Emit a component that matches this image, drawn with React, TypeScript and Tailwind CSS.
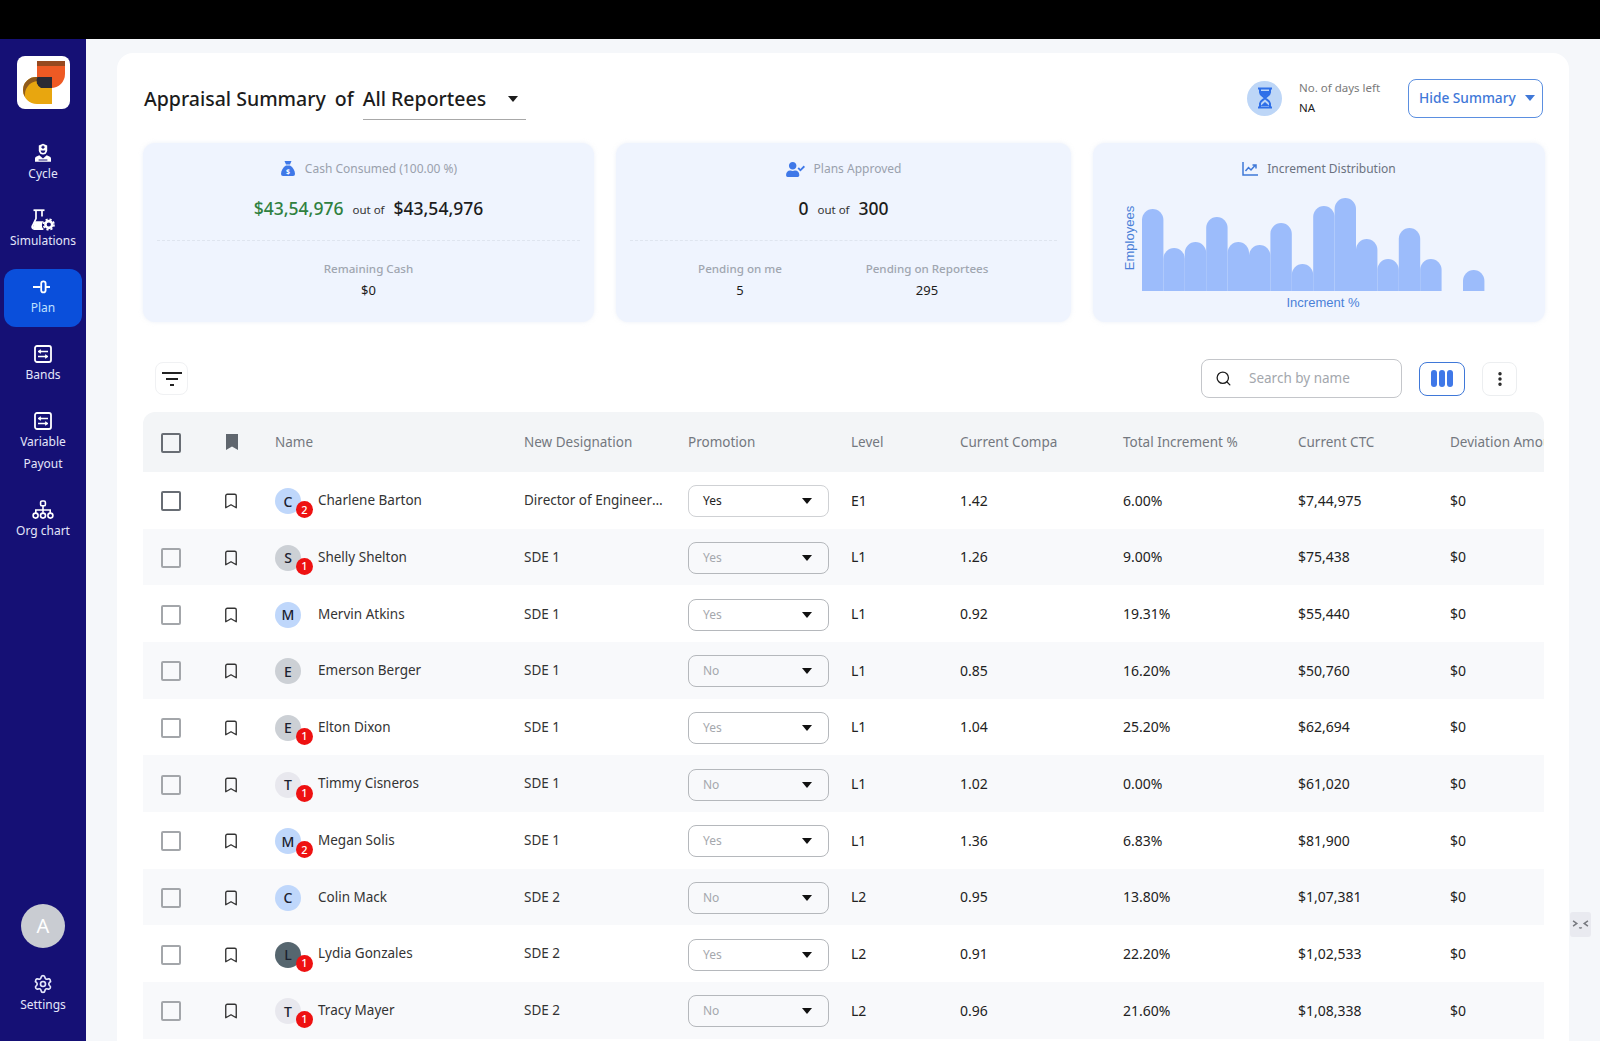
import { Bookmark, EllipsisVertical, Search, Settings } from "lucide-react";
import type { ReactNode } from "react";
import { FaUserCheck } from "react-icons/fa";

type Row = {
  name: string;
  designation: string;
  promotion: string;
  level: string;
  compa: string;
  increment: string;
  ctc: string;
  badge?: number;
  avatar: string;
};

const blue = "bg-[#bfd7fb]";
const gray = "bg-[#ccd0d5]";
const light = "bg-[#e8e8ee]";
const dark = "bg-[#56666f]";

const rows: Row[] = [
  { name: "Charlene Barton", designation: "Director of Engineering", promotion: "Yes", level: "E1", compa: "1.42", increment: "6.00%", ctc: "$7,44,975", badge: 2, avatar: blue },
  { name: "Shelly Shelton", designation: "SDE 1", promotion: "Yes", level: "L1", compa: "1.26", increment: "9.00%", ctc: "$75,438", badge: 1, avatar: gray },
  { name: "Mervin Atkins", designation: "SDE 1", promotion: "Yes", level: "L1", compa: "0.92", increment: "19.31%", ctc: "$55,440", avatar: blue },
  { name: "Emerson Berger", designation: "SDE 1", promotion: "No", level: "L1", compa: "0.85", increment: "16.20%", ctc: "$50,760", avatar: gray },
  { name: "Elton Dixon", designation: "SDE 1", promotion: "Yes", level: "L1", compa: "1.04", increment: "25.20%", ctc: "$62,694", badge: 1, avatar: gray },
  { name: "Timmy Cisneros", designation: "SDE 1", promotion: "No", level: "L1", compa: "1.02", increment: "0.00%", ctc: "$61,020", badge: 1, avatar: light },
  { name: "Megan Solis", designation: "SDE 1", promotion: "Yes", level: "L1", compa: "1.36", increment: "6.83%", ctc: "$81,900", badge: 2, avatar: blue },
  { name: "Colin Mack", designation: "SDE 2", promotion: "No", level: "L2", compa: "0.95", increment: "13.80%", ctc: "$1,07,381", avatar: blue },
  { name: "Lydia Gonzales", designation: "SDE 2", promotion: "Yes", level: "L2", compa: "0.91", increment: "22.20%", ctc: "$1,02,533", badge: 1, avatar: dark },
  { name: "Tracy Mayer", designation: "SDE 2", promotion: "No", level: "L2", compa: "0.96", increment: "21.60%", ctc: "$1,08,338", badge: 1, avatar: light },
];

const bars = [82, 43, 49, 74, 49, 46, 68, 27, 85, 93, 52, 32, 63, 32, 0, 21];

function Logo() {
  return (
    <svg viewBox="0 0 53 53" className="h-[53px] w-[53px] rounded-lg bg-white">
      <path d="M20 5H48V18A14 14 0 0 1 34 32H20Z" fill="#ee5a24" />
      <path d="M20 5H48V10H20Z" fill="#96491f" />
      <path d="M35 48H20A14 14 0 0 1 6 34A13 13 0 0 1 20 21H35Z" fill="#e8a60f" />
      <path d="M20 21A13 13 0 0 0 6 34A14 14 0 0 0 8 41A14 14 0 0 1 20 25H24V21Z" fill="#8f5a1c" />
      <path d="M20.5 21H35V32H24A8 8 0 0 1 20.5 21Z" fill="#2a2a34" />
    </svg>
  );
}

function CycleIcon() {
  return (
    <svg viewBox="0 0 20 20" className="h-5 w-5" fill="#fff">
      <path d="M5.8 2.6 10 .8l4.2 1.8v4.6a4.2 4.2 0 0 1-8.4 0Z" />
      <path d="M7.6 7.6h4.8a2.4 2.4 0 0 1-4.8 0Z" fill="#151075" />
      <rect x="9.3" y="2.6" width="1.4" height="3.2" fill="#151075" />
      <rect x="8.4" y="3.5" width="3.2" height="1.4" fill="#151075" />
      <path d="M6.3 12.2 10 15.6l3.7-3.4 3.3 1.6a1.8 1.8 0 0 1 1 1.6v3.4H2v-3.4a1.8 1.8 0 0 1 1-1.6Z" />
      <path d="M5.6 17h8.8" stroke="#151075" strokeWidth="1" />
    </svg>
  );
}

function SimulationsIcon() {
  return (
    <svg viewBox="0 0 24 22" className="h-[22px] w-6">
      <path d="M2.5 1.2h11" stroke="#fff" strokeWidth="1.8" fill="none" />
      <path d="M5 1.5v8L1.4 17a2.2 2.2 0 0 0 2 3.2h9M11 1.5v6" stroke="#fff" strokeWidth="1.7" fill="none" />
      <path d="M3.8 12.2h8.6a7 7 0 0 0-.4 7.8H3.6a1.6 1.6 0 0 1-1.5-2.4Z" fill="#fff" />
      <circle cx="17.8" cy="15.5" r="3.4" fill="none" stroke="#fff" strokeWidth="2.6" />
      <circle cx="17.8" cy="15.5" r="5.2" fill="none" stroke="#fff" strokeWidth="1.7" strokeDasharray="2.2 1.9" />
    </svg>
  );
}

function PlanIcon() {
  return (
    <svg viewBox="0 0 20 20" className="h-5 w-5" fill="none" strokeWidth="1.8">
      <path d="M0 10h7.5M13 10h4" stroke="#fff" />
      <rect x="8.2" y="4.4" width="4.4" height="11" rx="2.2" stroke="#fff" />
    </svg>
  );
}

function BandsIcon() {
  return (
    <svg viewBox="0 0 20 20" className="h-5 w-5" fill="none" stroke="#fff">
      <rect x="2" y="2" width="16" height="16" rx="2" strokeWidth="1.8" />
      <path d="M5 7.5h10M5 12.5h10" strokeWidth="1.5" />
      <path d="M7.8 5.8 6 7.5l1.8 1.7M12.2 10.8l1.8 1.7-1.8 1.7" strokeWidth="1.3" />
    </svg>
  );
}

function OrgIcon() {
  return (
    <svg viewBox="0 0 22 20" className="h-5 w-[22px]" fill="none" stroke="#fff" strokeWidth="1.6">
      <rect x="8.6" y="1" width="4.8" height="4.8" rx="1.4" />
      <path d="M11 5.8v7M3.8 13v-3h14.4v3" />
      <circle cx="3.6" cy="15.6" r="2.5" />
      <circle cx="11" cy="15.6" r="2.5" />
      <circle cx="18.4" cy="15.6" r="2.5" />
    </svg>
  );
}

function Caret({ className }: { className: string }) {
  return (
    <svg viewBox="0 0 10 6" className={className}>
      <path d="M0 0h10L5 6Z" fill="currentColor" />
    </svg>
  );
}

function NavItem({ icon, label, active }: { icon: ReactNode; label: ReactNode; active?: boolean }) {
  return (
    <div
      className={`flex w-[78px] flex-col items-center rounded-xl pt-2 pb-2 text-center text-[12px] leading-[22px] ${
        active ? "bg-[#0a4fdb] text-[#bfe0ff]" : "text-[#e4e6fa]"
      }`}
    >
      <div className="flex h-5 items-center justify-center">{icon}</div>
      <div>{label}</div>
    </div>
  );
}

function Sidebar() {
  return (
    <aside className="flex w-[86px] shrink-0 flex-col items-center justify-between bg-[#151075] pt-[17px] pb-[17px]">
      <div className="flex flex-col items-center gap-[9px]">
        <div className="mb-[17px]">
          <Logo />
        </div>
        <NavItem icon={<CycleIcon />} label="Cycle" />
        <NavItem icon={<SimulationsIcon />} label="Simulations" />
        <NavItem icon={<PlanIcon />} label="Plan" active />
        <NavItem icon={<BandsIcon />} label="Bands" />
        <NavItem
          icon={<BandsIcon />}
          label={
            <>
              Variable
              <br />
              Payout
            </>
          }
        />
        <NavItem icon={<OrgIcon />} label="Org chart" />
      </div>
      <div className="flex flex-col items-center gap-[18px]">
        <div className="flex h-11 w-11 items-center justify-center rounded-full bg-[#c9ccd2] text-[20px] text-white">
          A
        </div>
        <NavItem icon={<Settings size={20} strokeWidth={2} />} label="Settings" />
      </div>
    </aside>
  );
}

function Header() {
  return (
    <div className="flex h-[42px] items-center justify-between">
      <div className="flex h-full items-center pl-[1px] text-[19.5px] font-medium text-[#1c1c1c]">
        <span>Appraisal Summary</span>
        <span className="mx-[9px]">of</span>
        <div className="flex h-full w-[163px] items-center justify-between border-b border-[#a8a8a8] pr-[8px]">
          <span>All Reportees</span>
          <Caret className="h-[6px] w-[10px] text-[#1c1c1c]" />
        </div>
      </div>
      <div className="mr-[2px] flex items-center self-start">
        <div className="flex h-[35px] w-[35px] items-center justify-center rounded-full bg-[#bdd6f7]">
          <svg viewBox="0 0 16 22" className="h-[22px] w-4" fill="none" stroke="#2f6fe8" strokeWidth="2">
            <path d="M1 1.5h14M1 20.5h14M3 2v3.5c0 2.5 3.6 3.6 5 5.5 1.4 1.9 5 3 5 5.5V20M13 2v3.5c0 2.5-3.6 3.6-5 5.5-1.4 1.9-5 3-5 5.5V20" />
            <path d="M3.5 4h9v2.5L8 10 3.5 6.5Z M8 15l4.5 4h-9Z" fill="#2f6fe8" stroke="none" />
          </svg>
        </div>
        <div className="ml-[17px] mr-[26px] w-[83px] whitespace-nowrap text-[11.5px] leading-[20px]">
          <div className="text-[#7a7a7a]">No. of days left</div>
          <div className="text-[#222]">NA</div>
        </div>
        <div className="flex h-[39px] w-[135px] items-center justify-between rounded-lg border border-[#5b8fe0] bg-white pl-[10px] pr-[7px] text-[13.7px] font-medium text-[#3f78d8]">
          <span>Hide Summary</span>
          <Caret className="h-[6px] w-[10px]" />
        </div>
      </div>
    </div>
  );
}

function StatCard({ children }: { children: ReactNode }) {
  return (
    <div className="h-[179px] min-w-0 rounded-xl bg-[#eff4fe] px-[14px] pt-[16px] shadow-[0_0_4px_rgba(200,212,235,0.35)]">
      {children}
    </div>
  );
}

function CardTitle({ icon, text }: { icon: ReactNode; text: string }) {
  return (
    <div className="flex h-5 items-center justify-center gap-[9px] text-[12px] text-[#9aa1ad]">
      {icon}
      <span>{text}</span>
    </div>
  );
}

function Figures({ value, total, green }: { value: string; total: string; green?: boolean }) {
  return (
    <div className="mt-[16px] flex h-[26px] items-center justify-center">
      <span className={`text-[17.5px] font-medium ${green ? "text-[#2f8040]" : "text-[#1c1c1c]"}`}>{value}</span>
      <span className="mx-[9px] pt-[3px] text-[11.5px] text-[#333]">out of</span>
      <span className="text-[17.5px] font-medium text-[#1c1c1c]">{total}</span>
    </div>
  );
}

function Stat({ label, value }: { label: string; value: string }) {
  return (
    <div className="text-center">
      <div className="text-[11.6px] font-medium leading-[20px] text-[#a0a6b0]">{label}</div>
      <div className="mt-[1px] text-[13px] leading-[20px] text-[#1c1c1c]">{value}</div>
    </div>
  );
}

function SummaryCards() {
  return (
    <div className="mt-[23px] grid grid-cols-[451px_455px_1fr] gap-[22px]">
      <StatCard>
        <CardTitle
          text="Cash Consumed (100.00 %)"
          icon={
            <svg viewBox="0 0 16 16" className="h-4 w-4">
              <path d="M4.5 0h7L10 3.5H6Z M6 4.4h4c3 1.8 5 5 5 8.6a2 2 0 0 1-2 2H3a2 2 0 0 1-2-2c0-3.6 2-6.8 5-8.6Z" fill="#3f78e8" />
              <text x="8" y="12.5" textAnchor="middle" fontSize="7" fontWeight="700" fill="#fff">
                $
              </text>
            </svg>
          }
        />
        <Figures value="$43,54,976" total="$43,54,976" green />
        <div className="mt-[19px] border-t border-dashed border-[#dfe5ef]" />
        <div className="mt-[18px]">
          <Stat label="Remaining Cash" value="$0" />
        </div>
      </StatCard>
      <StatCard>
        <CardTitle text="Plans Approved" icon={<FaUserCheck className="h-[15px] w-[19px] text-[#3f78e8]" />} />
        <Figures value="0" total="300" />
        <div className="mt-[19px] border-t border-dashed border-[#dfe5ef]" />
        <div className="mt-[18px] grid grid-cols-[220px_154px]">
          <Stat label="Pending on me" value="5" />
          <Stat label="Pending on Reportees" value="295" />
        </div>
      </StatCard>
      <StatCard>
        <div className="flex h-5 items-center justify-center gap-[9px] text-[12px] text-[#6b7280]">
          <svg viewBox="0 0 16 14" className="h-[14px] w-4" fill="none" stroke="#3f78d8" strokeWidth="1.5">
            <path d="M1 0v13h15" />
            <path d="M3.5 9 6.5 5.5 9 8l4-4.5M10.5 3H14v3.5" />
          </svg>
          <span>Increment Distribution</span>
        </div>
        <svg viewBox="0 0 452 130" className="-mx-[14px] mt-[6px] block h-[130px] w-[calc(100%+28px)] max-w-none">
          {bars.map((h, i) =>
            h > 0 ? (
              <path
                key={i}
                d={`M${49 + i * 21.4} 106V${106 - h + 10.7}a10.7 10.7 0 0 1 21.4 0V106Z`}
                fill="#9cbcfb"
              />
            ) : null,
          )}
          <text
            x="0"
            y="0"
            transform="translate(41 53) rotate(-90)"
            textAnchor="middle"
            fontSize="13"
            fontFamily="'Liberation Sans', sans-serif"
            fill="#4a80d8"
          >
            Employees
          </text>
          <text x="230" y="122" textAnchor="middle" fontSize="13" fontFamily="'Liberation Sans', sans-serif" fill="#4a80d8">
            Increment %
          </text>
        </svg>
      </StatCard>
    </div>
  );
}

function Toolbar() {
  return (
    <div className="mt-[37px] flex h-[39px] items-center justify-between pl-[12px] pr-[28px]">
      <div className="flex h-[33px] w-[33px] items-center justify-center rounded-lg border border-[#f0f1f3] bg-white">
        <svg viewBox="0 0 20 14" className="h-[14px] w-5" fill="none" stroke="#222" strokeWidth="1.8">
          <path d="M0 1h20M4 7h12M8 13h4" />
        </svg>
      </div>
      <div className="flex items-center">
        <div className="flex h-[39px] w-[201px] items-center rounded-lg border border-[#c4c6ca] pl-[13px] text-[13.5px] text-[#a3a7ad]">
          <Search size={17} strokeWidth={1.8} className="text-[#1c1c1c]" />
          <span className="ml-[17px]">Search by name</span>
        </div>
        <div className="ml-[17px] flex h-[34px] w-[46px] items-center justify-center gap-[2px] rounded-lg border border-[#3f78d8]">
          <div className="h-[17px] w-[6px] rounded-sm bg-[#3f78e8]" />
          <div className="h-[17px] w-[6px] rounded-sm bg-[#3f78e8]" />
          <div className="h-[17px] w-[6px] rounded-sm bg-[#3f78e8]" />
        </div>
        <div className="ml-[17px] flex h-[34px] w-[35px] items-center justify-center rounded-lg border border-[#eceef0]">
          <EllipsisVertical size={18} strokeWidth={2.6} className="text-[#222]" />
        </div>
      </div>
    </div>
  );
}

function Checkbox({ strong }: { strong?: boolean }) {
  return <div className={`mt-[2px] h-5 w-5 rounded-[2px] border-2 ${strong ? "border-[#686d74]" : "border-[#a3a6aa]"}`} />;
}

function Cells({ check, mark, name, cols }: { check: ReactNode; mark: ReactNode; name: ReactNode; cols: ReactNode[] }) {
  return (
    <>
      <div className="w-[62px] shrink-0">{check}</div>
      <div className="w-[52px] shrink-0">{mark}</div>
      <div className="w-[249px] shrink-0">{name}</div>
      <div className="w-[164px] shrink-0">{cols[0]}</div>
      <div className="w-[163px] shrink-0">{cols[1]}</div>
      <div className="w-[109px] shrink-0">{cols[2]}</div>
      <div className="w-[163px] shrink-0">{cols[3]}</div>
      <div className="w-[175px] shrink-0">{cols[4]}</div>
      <div className="w-[152px] shrink-0">{cols[5]}</div>
      <div className="w-[94px] shrink-0 overflow-hidden whitespace-nowrap">{cols[6]}</div>
    </>
  );
}

function TableRow({ row, index }: { row: Row; index: number }) {
  return (
    <div
      className={`flex h-[56.67px] items-center pl-[18px] text-[14px] text-[#222] ${
        index % 2 === 0 ? "bg-white" : "bg-[#f8f9fb]"
      }`}
    >
      <Cells
        check={<Checkbox strong={index === 0} />}
        mark={<Bookmark size={18} strokeWidth={1.8} className="-ml-[1px] mt-[2px] text-[#333]" />}
        name={
          <div className="flex items-center">
            <div className={`relative mt-[2px] flex h-[26px] w-[26px] items-center justify-center rounded-full text-[14px] font-medium text-[#1c2230] ${row.avatar}`}>
              {row.name[0]}
              {row.badge ? (
                <div className="absolute -bottom-[4px] -right-[12px] flex h-[17px] w-[17px] items-center justify-center rounded-full bg-[#ee1111] text-[11px] text-white">
                  {row.badge}
                </div>
              ) : null}
            </div>
            <span className="ml-[17px] text-[13.5px] text-[#333]">{row.name}</span>
          </div>
        }
        cols={[
          <div className="w-[141px] truncate text-[13.5px] text-[#333]">{row.designation}</div>,
          <div className={`mt-[2px] flex h-8 w-[141px] items-center justify-between rounded-lg border pl-[14px] pr-[16px] text-[12px] ${index === 0 ? "border-[#cfd1d4] bg-white text-[#222]" : "border-[#b5b8bc] text-[#a5a8ad]"}`}>
            <span>{row.promotion}</span>
            <Caret className="h-[6px] w-[10px] text-[#111]" />
          </div>,
          row.level,
          row.compa,
          row.increment,
          row.ctc,
          "$0",
        ]}
      />
    </div>
  );
}

function Table() {
  const heads = ["New Designation", "Promotion", "Level", "Current Compa", "Total Increment %", "Current CTC", "Deviation Amount"];
  return (
    <div className="mr-[1px] mt-[14px] overflow-hidden">
      <div className="flex h-[60px] items-center rounded-t-xl bg-[#f3f5f7] pl-[18px] text-[13.5px] text-[#73787f]">
        <Cells
          check={<Checkbox strong />}
          mark={
            <svg viewBox="0 0 12 16" className="ml-[3px] h-4 w-3">
              <path d="M0 0h12v16L6 12.5 0 16Z" fill="#5f666e" />
            </svg>
          }
          name="Name"
          cols={heads}
        />
      </div>
      {rows.map((row, i) => (
        <TableRow key={row.name} row={row} index={i} />
      ))}
    </div>
  );
}

export default function App() {
  return (
    <div className="relative flex h-[1041px] flex-col overflow-hidden bg-[#f5f7fa] font-['Noto_Sans',sans-serif]">
      <div className="h-[39px] shrink-0 bg-black" />
      <div className="flex min-h-0 flex-1">
        <Sidebar />
        <main className="min-w-0 flex-1 px-[31px] pt-[14px]">
          <div className="h-full rounded-t-2xl bg-white pl-[26px] pr-[24px] pt-[25px]">
            <Header />
            <SummaryCards />
            <Toolbar />
            <Table />
          </div>
        </main>
      </div>
      <div className="absolute right-[9px] top-[912px] flex h-[25px] w-[21px] items-center justify-center rounded-[3px] bg-[#e9eaf0]">
        <svg viewBox="0 0 16 10" className="h-[11px] w-[17px]" fill="none" stroke="#77797f" strokeWidth="1.4">
          <path d="m1 1.5 3.5 2.5L1 6.5M15 1.5 11.5 4l3.5 2.5M6.8 7.8c.7.6 1.7.6 2.4 0" />
        </svg>
      </div>
    </div>
  );
}
